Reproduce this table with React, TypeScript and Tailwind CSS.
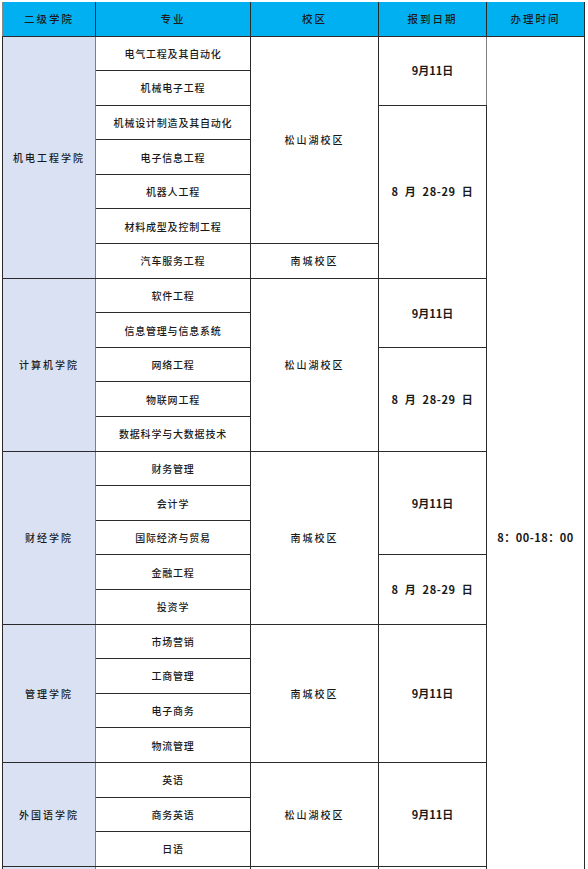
import React from "react";

const font = { fontFamily: '"Noto Sans CJK SC", "Noto Sans", sans-serif' };

const cell = "border border-[#2b2b2b] text-center align-middle p-0";
const major = `${cell} text-[10px] tracking-[0.8px] font-medium text-[#1a1a1a]`;
const college = "border border-[#2b2b2b] border-r-[#7f7f7f] bg-[#d9e1f2] text-center align-middle p-0 text-[10px] tracking-[2px] font-medium text-[#1a1a1a]";
const campus = `${cell} text-[10px] tracking-[2px] font-medium text-[#1a1a1a]`;
const date = `${cell} border-r-[#7f7f7f] text-[11px] font-bold text-[#1a1a1a]`;

const Sept = ({ span }: { span: number }) => (
  <td rowSpan={span} className={date}>
    9月11日
  </td>
);

const Aug = ({ span }: { span: number }) => (
  <td rowSpan={span} className={date}>
    <span className="whitespace-pre tracking-[0.6px]">8  月  28-29  日</span>
  </td>
);

export default function App() {
  const rowH = "h-[34.6px]";
  return (
    <div className="w-[588px] h-[869px] overflow-hidden bg-white pt-[2px] pl-[2px]" style={font}>
      <table className="table-fixed border-collapse w-[582px]">
        <colgroup>
          <col className="w-[93px]" />
          <col className="w-[155px]" />
          <col className="w-[128px]" />
          <col className="w-[108px]" />
          <col className="w-[98px]" />
        </colgroup>
        <thead>
          <tr className="h-[34px] bg-[#00b0f0] text-[10.5px] font-medium tracking-[2px] text-[#1a1a1a]">
            <th className="border-x border-b border-[#2b2b2b] border-l-[#8a8a8a] font-medium">二级学院</th>
            <th className="border-x border-b border-[#2b2b2b] font-medium">专业</th>
            <th className="border-x border-b border-[#2b2b2b] font-medium">校区</th>
            <th className="border-x border-b border-[#2b2b2b] font-medium">报到日期</th>
            <th className="border-x border-b border-[#2b2b2b] font-medium">办理时间</th>
          </tr>
        </thead>
        <tbody>
          <tr className={rowH}>
            <td rowSpan={7} className={college}>机电工程学院</td>
            <td className={major}>电气工程及其自动化</td>
            <td rowSpan={6} className={campus}>松山湖校区</td>
            <Sept span={2} />
            <td rowSpan={29} className={`${cell} text-[11px] font-bold text-[#1a1a1a] tracking-[0.5px]`}>
              8：00-18：00
            </td>
          </tr>
          <tr className={rowH}>
            <td className={major}>机械电子工程</td>
          </tr>
          <tr className={rowH}>
            <td className={major}>机械设计制造及其自动化</td>
            <Aug span={5} />
          </tr>
          <tr className={rowH}>
            <td className={major}>电子信息工程</td>
          </tr>
          <tr className={rowH}>
            <td className={major}>机器人工程</td>
          </tr>
          <tr className={rowH}>
            <td className={major}>材料成型及控制工程</td>
          </tr>
          <tr className={rowH}>
            <td className={major}>汽车服务工程</td>
            <td className={campus}>南城校区</td>
          </tr>

          <tr className={rowH}>
            <td rowSpan={5} className={college}>计算机学院</td>
            <td className={major}>软件工程</td>
            <td rowSpan={5} className={campus}>松山湖校区</td>
            <Sept span={2} />
          </tr>
          <tr className={rowH}>
            <td className={major}>信息管理与信息系统</td>
          </tr>
          <tr className={rowH}>
            <td className={major}>网络工程</td>
            <Aug span={3} />
          </tr>
          <tr className={rowH}>
            <td className={major}>物联网工程</td>
          </tr>
          <tr className={rowH}>
            <td className={major}>数据科学与大数据技术</td>
          </tr>

          <tr className={rowH}>
            <td rowSpan={5} className={college}>财经学院</td>
            <td className={major}>财务管理</td>
            <td rowSpan={5} className={campus}>南城校区</td>
            <Sept span={3} />
          </tr>
          <tr className={rowH}>
            <td className={major}>会计学</td>
          </tr>
          <tr className={rowH}>
            <td className={major}>国际经济与贸易</td>
          </tr>
          <tr className={rowH}>
            <td className={major}>金融工程</td>
            <Aug span={2} />
          </tr>
          <tr className={rowH}>
            <td className={major}>投资学</td>
          </tr>

          <tr className={rowH}>
            <td rowSpan={4} className={college}>管理学院</td>
            <td className={major}>市场营销</td>
            <td rowSpan={4} className={campus}>南城校区</td>
            <Sept span={4} />
          </tr>
          <tr className={rowH}>
            <td className={major}>工商管理</td>
          </tr>
          <tr className={rowH}>
            <td className={major}>电子商务</td>
          </tr>
          <tr className={rowH}>
            <td className={major}>物流管理</td>
          </tr>

          <tr className={rowH}>
            <td rowSpan={3} className={college}>外国语学院</td>
            <td className={major}>英语</td>
            <td rowSpan={3} className={campus}>松山湖校区</td>
            <Sept span={3} />
          </tr>
          <tr className={rowH}>
            <td className={major}>商务英语</td>
          </tr>
          <tr className={rowH}>
            <td className={major}>日语</td>
          </tr>

          {/* rows below the visible area, so the time cell keeps its centre */}
          <tr className={rowH}>
            <td rowSpan={5} className={college}></td>
            <td className={major}></td>
            <td rowSpan={5} className={campus}></td>
            <td rowSpan={5} className={date}></td>
          </tr>
          <tr className={rowH}>
            <td className={major}></td>
          </tr>
          <tr className={rowH}>
            <td className={major}></td>
          </tr>
          <tr className={rowH}>
            <td className={major}></td>
          </tr>
          <tr className={rowH}>
            <td className={major}></td>
          </tr>
        </tbody>
      </table>
    </div>
  );
}
